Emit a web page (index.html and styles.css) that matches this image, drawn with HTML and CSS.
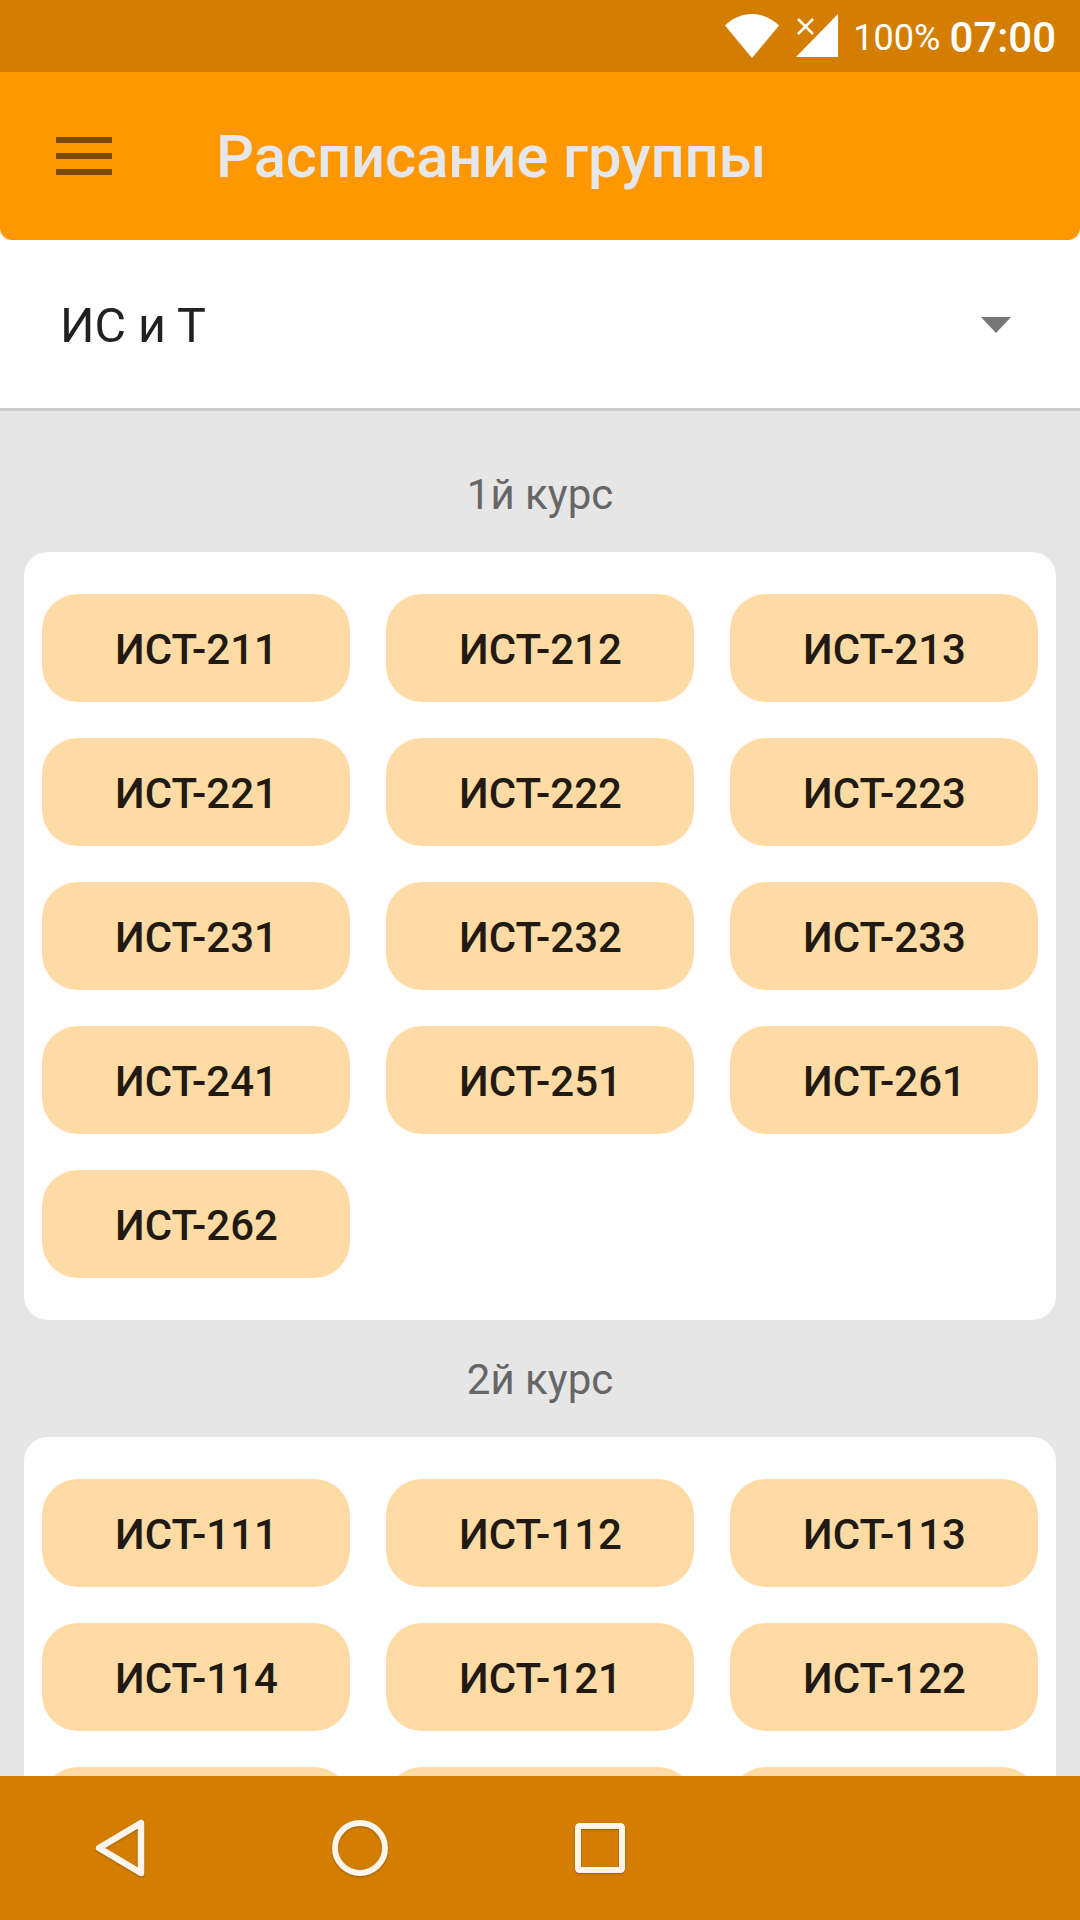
FILE: index.html
```html
<!DOCTYPE html>
<html lang="ru">
<head>
<meta charset="utf-8">
<title>Расписание группы</title>
<link rel="stylesheet" href="styles.css">
</head>
<body>
<div class="screen">
  <header class="status-bar">
    <svg class="wifi" width="54" height="44" viewBox="0 0 54 44"><path d="M0 11.500C7 4.500 16.500 0 27 0s20 4.500 27 11.500L27 44z" fill="#fff"/></svg>
    <svg class="signal" width="44" height="44" viewBox="0 0 44 44"><path d="M43 0v43H1z" fill="#fff"/><path d="M3 5l15 15M18 5L3 20" stroke="#fff" stroke-width="2.500" fill="none"/></svg>
    <span class="battery">100%</span>
    <span class="clock">07:00</span>
  </header>
  <div class="app-bar">
    <div class="menu-icon"><span></span><span></span><span></span></div>
    <h1 class="title">Расписание группы</h1>
  </div>
  <div class="select">
    <span class="select-value">ИС и Т</span>
    <svg class="select-arrow" width="30" height="16" viewBox="0 0 30 16"><path d="M0 0h30L15 16z" fill="#757575"/></svg>
  </div>
  <main class="content">
    <h2 class="course">1й курс</h2>
    <section class="card">
      <button class="group">ИСТ-211</button><button class="group">ИСТ-212</button><button class="group">ИСТ-213</button>
      <button class="group">ИСТ-221</button><button class="group">ИСТ-222</button><button class="group">ИСТ-223</button>
      <button class="group">ИСТ-231</button><button class="group">ИСТ-232</button><button class="group">ИСТ-233</button>
      <button class="group">ИСТ-241</button><button class="group">ИСТ-251</button><button class="group">ИСТ-261</button>
      <button class="group">ИСТ-262</button>
    </section>
    <h2 class="course">2й курс</h2>
    <section class="card">
      <button class="group">ИСТ-111</button><button class="group">ИСТ-112</button><button class="group">ИСТ-113</button>
      <button class="group">ИСТ-114</button><button class="group">ИСТ-121</button><button class="group">ИСТ-122</button>
      <button class="group"></button><button class="group"></button><button class="group"></button>
    </section>
  </main>
  <nav class="nav-bar">
    <div class="nav-cell"><svg class="nav-icon" width="54" height="62" viewBox="0 0 54 62"><path d="M48 6v50L6 31z" fill="none" stroke="#fdf5ec" stroke-width="6.500" stroke-linejoin="round"/></svg></div>
    <div class="nav-cell"><svg class="nav-icon" width="58" height="58" viewBox="0 0 58 58"><circle cx="29" cy="29" r="25" fill="none" stroke="#fdf5ec" stroke-width="6"/></svg></div>
    <div class="nav-cell"><svg class="nav-icon" width="52" height="52" viewBox="0 0 52 52"><rect x="4" y="4" width="44" height="44" rx="1.500" fill="none" stroke="#fdf5ec" stroke-width="6" stroke-linejoin="round"/></svg></div>
  </nav>
</div>
</body>
</html>
```

FILE: styles.css
```css
* { box-sizing: border-box; }
html, body { margin: 0; padding: 0; }
body { font-family: Roboto, "Noto Sans", sans-serif; background: #fff; }
.screen { width: 1080px; height: 1920px; display: flex; flex-direction: column; overflow: hidden; background: #fff; }

.status-bar { flex: 0 0 72px; background: #d37e00; display: flex; align-items: center; justify-content: flex-end; padding-right: 24px; color: #fff; }
.wifi { margin-right: 16px; margin-top: -1px; }
.signal { margin-right: 14px; margin-top: -1px; }
.battery { font-size: 36px; font-weight: 400; margin-right: 9px; padding-top: 4px; }
.clock { font-size: 42px; font-weight: 500; padding-top: 2px; }

.app-bar { flex: 0 0 168px; background: #ff9800; border-radius: 0 0 12px 12px; display: flex; align-items: center; padding-left: 56px; }
.menu-icon { width: 56px; display: flex; flex-direction: column; gap: 10px; margin-right: 104px; }
.menu-icon span { display: block; height: 6px; background: #7a4900; }
.title { margin: 0; padding-top: 2px; font-size: 59.6px; font-weight: 500; color: #e6e7ec; }

.select { flex: 0 0 171px; background: #fff; border-bottom: 3px solid #cccccc; display: flex; align-items: center; justify-content: space-between; padding: 2px 69px 0 60px; }
.select-value { font-size: 48.4px; color: #212121; }

.content { flex: 1 1 0; min-height: 0; overflow: hidden; background: #e6e6e6; padding: 24px 24px 0; }
.course { margin: 0; height: 117px; padding-top: 2px; display: flex; align-items: center; justify-content: center; font-size: 42px; font-weight: 400; color: #666; }
.card { background: #fff; border-radius: 24px; padding: 42px 18px; display: grid; grid-template-columns: repeat(3, 308px); gap: 36px; }
.group { height: 108px; border: 0; padding: 2px 0 0 1px; border-radius: 36px; background: #fedba5; color: #211a12; font-family: inherit; font-size: 42px; font-weight: 500; }

.nav-bar { flex: 0 0 144px; background: #d37e00; display: flex; }
.nav-cell { width: 240px; display: flex; align-items: center; justify-content: center; }
.nav-icon { filter: drop-shadow(0 1px 1px rgba(0, 0, 0, 0.25)); }
```
